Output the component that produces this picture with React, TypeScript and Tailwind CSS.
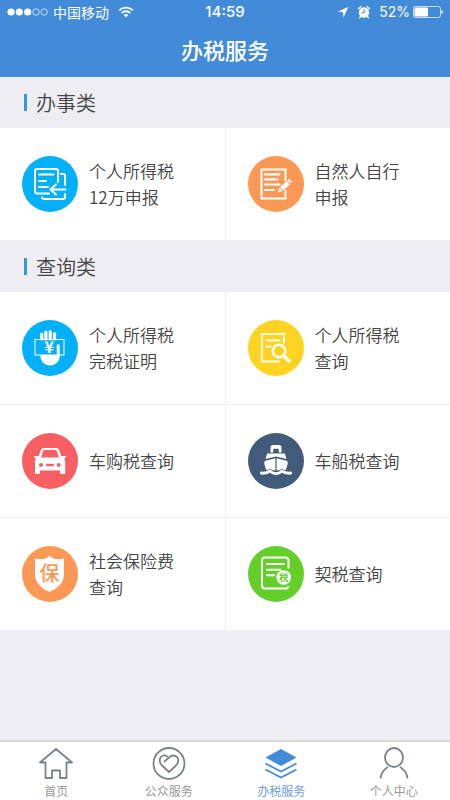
import type { ReactNode } from 'react';

type Service = {
  label: string;
  color: string;
  icon: ReactNode;
};

const declareIcon = (
  <g fill="none" stroke="#fff" strokeWidth="2" strokeLinecap="round" strokeLinejoin="round">
    <path d="M27 37.500H15a2 2 0 0 1-2-2V15a2 2 0 0 1 2-2h19a2 2 0 0 1 2 2v11" />
    <path d="M39 18h2.500a1.500 1.500 0 0 1 1.500 1.500V29M43 38V41a2 2 0 0 1-2 2H22a2 2 0 0 1-2-1.500" />
    <path d="M17 18.500h14.500M17 25h7M17 31h9" />
    <path d="M43.500 33.500H29M34 28.500l-5.500 5 5.500 5" />
  </g>
);

const selfDeclareIcon = (
  <g>
    <path d="M37.500 25V13.500h-24v29h24V34" fill="none" stroke="#fff" strokeWidth="2" />
    <path d="M17 18.300h14.500M17 23.300h12.500M17 28.500h14.500M17 34h8.500" stroke="#fff" strokeWidth="2.200" strokeLinecap="round" />
    <path d="M29.800 36.500l1.600-4.800 3.200 3.300z" fill="#fff" />
    <path d="M32 31l6.700-6 3.200 3.400-6.700 6z" fill="#fff" />
    <path d="M39.400 24.400l1.300-1.100q.7-.4 1.200.2l1.400 1.500q.5.600-.1 1.200l-1 1.100z" fill="#fff" />
  </g>
);

const certificateIcon = (
  <g>
    <path d="M19.700 19v-5M23.900 19v-7M28.200 19v-7.300M32.500 19v-5.500" stroke="#fff" strokeWidth="3.200" strokeLinecap="round" />
    <rect x="13" y="19.500" width="29" height="15.500" fill="none" stroke="#fff" strokeWidth="1" />
    <path d="M18.200 35h16.100V26a1.700 1.700 0 0 1 3.400 0V36.500C37.500 42 33 45.500 28 45.500S18.500 42 18.200 35z" fill="#fff" />
    <path d="M34.300 34.500v-10" fill="none" stroke="#04b0f7" strokeWidth="0.800" />
    <text x="27.300" y="32.500" textAnchor="middle" fontSize="16" fontWeight="700" fill="#fff">
      ¥
    </text>
  </g>
);

const searchDocIcon = (
  <g fill="none" stroke="#fff" strokeWidth="1.800">
    <path d="M36 23.500V13.800H13.800v27.700H32" />
    <path d="M17.700 20.300h14.600M17.700 26.500h5.600" />
    <circle cx="31" cy="31" r="6.300" strokeWidth="2.400" />
    <path d="M36 36l6 6" strokeWidth="3.400" />
  </g>
);

const carIcon = (
  <path
    fill="#fff"
    fillRule="evenodd"
    d="M12.500 23h4.300l2-5.700q.8-2.300 3.200-2.300h12q2.400 0 3.200 2.300l2 5.700h4.300q.8.200.5 1.200-.2.800-1 .8h-1q1.200 1.500 1.200 3.500V40q0 1-1 1h-3q-1 0-1-1v-2.500H18V40q0 1-1 1h-3q-1 0-1-1V28.500q0-2 1.200-3.500h-1q-.800 0-1-.800-.300-1 .300-1.200zM19 24.500h18l-2-6q-.4-1.500-1.500-1.500h-11q-1.100 0-1.500 1.500zM19 30a2 2 0 1 0 0 4 2 2 0 0 0 0-4zM36.700 30a2 2 0 1 0 0 4 2 2 0 0 0 0-4zM25 30.800h6q1 0 1 1.200t-1 1.200h-6q-1 0-1-1.200t1-1.200z"
  />
);

const shipIcon = (
  <g fill="#fff">
    <path d="M22.500 19.500V14.500q0-2.500 2.500-2.500h6q2.500 0 2.500 2.500v5h-2.700v-3q0-.8-.8-.8h-4q-.8 0-.8.8v3z" />
    <path d="M19.300 20.600h17.400q1.200 2.400 1.700 5.500L28 23.600l-10.400 2.500q.5-3.100 1.700-5.500z" />
    <path d="M27.400 25.200v12.200q-3-.2-5.400-2-1.700 1.500-3.800 1.700-1.700-4-2-7.500-.1-1.500 1.300-1.900z" />
    <path d="M28.600 25.200v12.200q3-.2 5.400-2 1.700 1.500 3.800 1.700 1.700-4 2-7.500.1-1.500-1.300-1.900z" />
    <path
      d="M13.500 40c3.500.6 6-.2 8.500-2 2 1.800 4 2.700 6 2.700s4-.9 6-2.700c2.500 1.800 5 2.600 8.500 2"
      fill="none"
      stroke="#fff"
      strokeWidth="3"
      strokeLinecap="round"
    />
  </g>
);

const insuranceIcon = (
  <g>
    <path
      d="M27.500 9.500q3 3.500 7.500 3.600 3.700.1 7-.6V28c0 9-6.500 14.500-14.500 17.800C19.500 42.500 13 37 13 28V12.500q3.300.7 7 .6 4.500-.1 7.500-3.600z"
      fill="#fff"
    />
    <text x="27.500" y="34.500" textAnchor="middle" fontSize="20" fontWeight="500" fill="#fb9856">
      保
    </text>
  </g>
);

const deedIcon = (
  <g>
    <path
      d="M40.500 22.500V14.500a3 3 0 0 0-3-3h-20.500a3 3 0 0 0-3 3V39.500a3 3 0 0 0 3 3h20.500a3 3 0 0 0 3-2.500"
      fill="none"
      stroke="#fff"
      strokeWidth="2"
    />
    <path d="M19 18h16.700M19 23.700h13.500M19 29.300h7" stroke="#fff" strokeWidth="2" strokeLinecap="round" />
    <circle cx="35.700" cy="31.500" r="7.300" fill="#fff" />
    <text x="35.700" y="35" textAnchor="middle" fontSize="9" fontWeight="700" fill="#65cf2a">
      税
    </text>
  </g>
);

const handleServices: Service[] = [
  { label: '个人所得税12万申报', color: 'bg-[#04b0f7]', icon: declareIcon },
  { label: '自然人自行申报', color: 'bg-[#fb9856]', icon: selfDeclareIcon },
];

const queryServices: Service[] = [
  { label: '个人所得税完税证明', color: 'bg-[#04b0f7]', icon: certificateIcon },
  { label: '个人所得税查询', color: 'bg-[#ffd321]', icon: searchDocIcon },
  { label: '车购税查询', color: 'bg-[#f85f62]', icon: carIcon },
  { label: '车船税查询', color: 'bg-[#425b7b]', icon: shipIcon },
  { label: '社会保险费查询', color: 'bg-[#fb9856]', icon: insuranceIcon },
  { label: '契税查询', color: 'bg-[#65cf2a]', icon: deedIcon },
];

const tabs = [
  {
    label: '首页',
    active: false,
    icon: <path d="M17 2L1 15.500h5.500V31H13v-7.500h8V31h6.500V15.500H33z" strokeLinejoin="round" />,
  },
  {
    label: '公众服务',
    active: false,
    icon: (
      <>
        <circle cx="17" cy="16.500" r="15.500" />
        <path
          d="M12.500 14.500L17 10.500C20 7.500 24.500 8 26 11.500c1 3-.5 5.500-2.500 7.500L17 25l-6.500-6C8 16.500 7 13.500 8.500 10.800 10 8 13 7.800 15 9.500"
          strokeLinecap="round"
          strokeLinejoin="round"
        />
      </>
    ),
  },
  {
    label: '办税服务',
    active: true,
    icon: (
      <>
        <path d="M17 2l15.500 8.500L17 19 1.500 10.500z" fill="currentColor" stroke="none" />
        <path d="M1.500 16.500L17 24.500l15.500-8M1.500 22.500L17 30.500l15.500-8" />
      </>
    ),
  },
  {
    label: '个人中心',
    active: false,
    icon: (
      <>
        <ellipse cx="17" cy="10.500" rx="9" ry="9.500" />
        <path d="M3.500 31.500c.5-5 3-9 7.500-11.500M30.500 31.500c-.5-5-3-9-7.500-11.500" />
      </>
    ),
  },
];

function StatusBar() {
  return (
    <div className="grid h-6 grid-cols-3 items-center px-[7px]">
      <div className="flex items-center gap-[5px]">
        <svg viewBox="0 0 41 8" className="h-2 w-[41px]" fill="#fff">
          <circle cx="4" cy="4" r="3.600" />
          <circle cx="12.300" cy="4" r="3.600" />
          <circle cx="20.700" cy="4" r="3.600" />
          <circle cx="29" cy="4" r="3.200" fill="none" stroke="#fff" strokeWidth="0.700" />
          <circle cx="37.200" cy="4" r="3.200" fill="none" stroke="#fff" strokeWidth="0.700" />
        </svg>
        <span className="text-sm leading-6 whitespace-nowrap">中国移动</span>
        <svg viewBox="0 0 16 12" className="ml-1 h-3 w-4" fill="none" stroke="#fff" strokeWidth="1.800">
          <path d="M1.200 4.300a9.800 9.800 0 0 1 13.600 0M3.700 7a6.200 6.200 0 0 1 8.600 0" />
          <path d="M5.700 9.100a3.300 3.300 0 0 1 4.600 0L8 11.500z" fill="#fff" stroke="none" />
        </svg>
      </div>
      <span className="text-center font-['Inter',sans-serif] text-[15px] leading-6 font-medium">14:59</span>
      <div className="flex items-center justify-end">
        <svg viewBox="0 0 12 12" className="mr-2 h-3 w-3" fill="#fff">
          <path d="M11.500.700L6.500 11.500 6 6.200.700 5.700z" />
        </svg>
        <svg viewBox="0 0 14 14" className="mr-2 h-[14px] w-[14px]" fill="#fff">
          <circle cx="7" cy="7.500" r="5.200" />
          <path
            d="M1.500 3.800L4 1.600M12.500 3.800L10 1.600M3.500 11.500l-1 1.300M10.500 11.500l1 1.300"
            stroke="#fff"
            strokeWidth="1.300"
            strokeLinecap="round"
          />
          <path d="M7.200 4.300v3.500H4.500" fill="none" stroke="#428bd8" strokeWidth="1" />
        </svg>
        <span className="mr-[3px] font-['Inter',sans-serif] text-sm leading-6">52%</span>
        <svg viewBox="0 0 30 12" className="h-3 w-[30px]">
          <rect x="0.500" y="0.500" width="27" height="11" rx="2" fill="none" stroke="#fff" strokeOpacity="0.700" />
          <rect x="1.500" y="1.500" width="13.500" height="9" rx="1" fill="#fff" />
          <path d="M28.500 4q1.500.500 1.500 2t-1.500 2z" fill="#fff" />
        </svg>
      </div>
    </div>
  );
}

function ServiceSection({ title, services }: { title: string; services: Service[] }) {
  return (
    <section>
      <div className="flex h-[51px] items-center gap-[9px] px-6">
        <span className="h-[17px] w-[3px] bg-[#3498e0]" />
        <h2 className="text-xl font-[350] text-[#444]">{title}</h2>
      </div>
      <div className="grid grid-cols-2 gap-px border-b border-[#eeedf2] bg-[#eeedf2]">
        {services.map((s) => (
          <a key={s.label} href="#" className="flex h-28 items-center gap-[11px] bg-white px-[22px]">
            <span className={`h-14 w-14 shrink-0 rounded-full ${s.color}`}>
              <svg viewBox="0 0 56 56" className="h-14 w-14">
                {s.icon}
              </svg>
            </span>
            <span className="max-w-[88px] text-[17px] leading-[26px] font-[350] text-[#444]">{s.label}</span>
          </a>
        ))}
      </div>
    </section>
  );
}

function TabBar() {
  return (
    <nav className="grid grid-cols-4 border-t-2 border-[#d8d8dc] bg-white">
      {tabs.map((tab) => (
        <a
          key={tab.label}
          href="#"
          className={`flex flex-col items-center gap-0.5 pt-[5px] ${tab.active ? 'text-[#428bd8]' : 'text-[#7b828c]'}`}
        >
          <svg viewBox="0 0 34 33" className="h-[33px] w-[34px]" fill="none" stroke="currentColor" strokeWidth="1.800">
            {tab.icon}
          </svg>
          <span className={`text-xs leading-[18px] ${tab.active ? 'text-[#6ba0d4]' : 'text-[#999]'}`}>{tab.label}</span>
        </a>
      ))}
    </nav>
  );
}

export default function App() {
  return (
    <div className="flex min-h-screen flex-col bg-[#eeedf2] font-['Noto_Sans_CJK_SC',sans-serif]">
      <header className="bg-[#428bd8] text-white">
        <StatusBar />
        <h1 className="h-[53px] text-center text-[22px] leading-[51px] font-medium">办税服务</h1>
      </header>
      <main className="flex-1">
        <ServiceSection title="办事类" services={handleServices} />
        <ServiceSection title="查询类" services={queryServices} />
      </main>
      <TabBar />
    </div>
  );
}
